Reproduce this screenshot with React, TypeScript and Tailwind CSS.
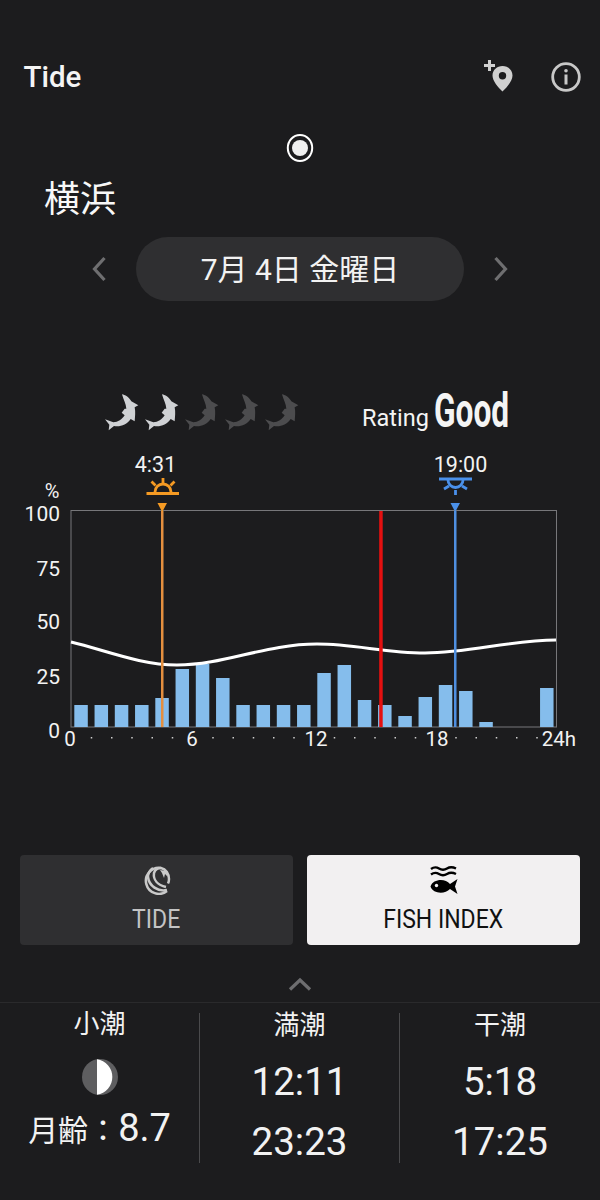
const FONT = "font-['Roboto','Noto_Sans_CJK_JP',sans-serif]";

function Fish({ dim }: { dim?: boolean }) {
  return (
    <svg width="35" height="38" viewBox="10 25 105 114" className="shrink-0 mr-[5px]">
      <path
        d="M64 29 C73 30 85 38 92 50 L113 62 L102 68 C105 82 103 95 102 110 L90 103 C78 120 58 128 40 124 L24 137 L26 120 L13 104 L38 113 C52 113 64 104 72 92 L63 84 L72 72 L77 72 C76 58 68 44 64 29 Z"
        fill={dim ? "#4c4c4e" : "#cfd1d4"}
      />
    </svg>
  );
}

const bars = [705, 705, 705, 705, 698, 669, 664, 678, 705, 705, 705, 705, 673, 665, 700, 705, 716, 697, 685, 691, 722, 727, 727, 688];

const ticks = Array.from({ length: 25 }, (_, i) => i).filter((i) => i % 6 !== 0);

function Chart() {
  const yLabels: [string, number][] = [["100", 514], ["75", 569], ["50", 622], ["25", 677], ["0", 731]];
  const xLabels: [string, number][] = [["0", 70], ["6", 192], ["12", 316], ["18", 437], ["24h", 559]];
  return (
    <svg width="600" height="320" viewBox="0 0 600 320" className="block">
      <g transform="translate(0,-450)" fontFamily="Roboto, sans-serif" fill="#f2f2f2">
        <rect x="71" y="510.5" width="485.5" height="216.5" fill="none" stroke="#77777a" strokeWidth="1" />
        {bars.map((top, i) =>
          top < 727 ? <rect key={i} x={74.3 + i * 20.25} y={top} width="13.5" height={727 - top} fill="#85bdec" /> : null,
        )}
        <path d="M71 642 C105 650 140 665 177 665 C225 665 265 644 317 644 C355 644 385 653 425 653 C470 653 510 640 556 640" fill="none" stroke="#ffffff" strokeWidth="3" />
        <rect x="161" y="511" width="2.500" height="216" fill="#e48f3f" />
        <path d="M157.500 503 H167 L162.200 512 Z" fill="#f59a23" />
        <rect x="454" y="511" width="2.500" height="216" fill="#4f8fe0" />
        <path d="M450.500 503 H460 L455.200 512 Z" fill="#4a90ea" />
        <rect x="379.200" y="511" width="3.500" height="216" fill="#e41010" />
        {yLabels.map(([t, y]) => (
          <text key={t} x="60" y={y + 7} fontSize="21" textAnchor="end">{t}</text>
        ))}
        {xLabels.map(([t, x]) => (
          <text key={t} x={x} y="746" fontSize="20.500" textAnchor="middle">{t}</text>
        ))}
        {ticks.map((i) => (
          <rect key={i} x={70.5 + i * 20.25} y="737" width="1.500" height="1.500" fill="#cccccc" />
        ))}
        <text x="52" y="498" fontSize="20" textAnchor="middle">%</text>
        <text x="155.500" y="471.500" fontSize="21.500" textAnchor="middle">4:31</text>
        <text x="460.500" y="471.500" fontSize="21.500" textAnchor="middle">19:00</text>
        <g stroke="#f59a23" strokeWidth="2.800" fill="none">
          <path d="M146.500 493.500 H179" />
          <path d="M155 492 A8 8 0 0 1 171 492" />
          <path d="M163 478 V484 M151.500 481.500 L155.500 485.500 M174.500 481.500 L170.500 485.500" />
        </g>
        <g stroke="#4a90ea" strokeWidth="2.800" fill="none">
          <path d="M439 479 H472" />
          <path d="M448 480 A7.500 7.500 0 0 0 463 480" />
          <path d="M455.500 490 V495 M444 489 L449 486 M467 489 L462 486" />
        </g>
      </g>
    </svg>
  );
}

function TideIcon() {
  return (
    <svg width="28" height="30" viewBox="0 0 28 30" className="block">
      <g fill="none" stroke="#c9c9c9" strokeWidth="2.500">
        <path d="M24 26 A13 13 0 1 1 18 3 C23 4 26 9 26 14 C26 16 25.500 17.500 25 18.500" />
        <path d="M24 25 C15 27 6 21 5 12 C5 8 7 5 10 3" />
        <path d="M23 22 C15 20 10 15 11 8 C12 5 15 3 18 3" />
      </g>
      <path d="M17 5 L23 6 L25 12 L22 9 L21 13 L19 8 Z" fill="#c9c9c9" />
    </svg>
  );
}

function FishIndexIcon() {
  return (
    <svg width="28" height="28" viewBox="0 0 28 28" className="block">
      <g fill="none" stroke="#000" strokeWidth="2.400">
        <path d="M1 3 Q5 0 9 2.500 T17 2.500 T26 2.500" />
        <path d="M1 8.500 Q5 5.500 9 8 T17 8 T26 8" />
      </g>
      <path d="M0.500 20.500 C3 13 15 12 20 18 L27.500 13 L25 20.500 L27.500 28 L20 23 C15 28.500 3 28 0.500 20.500 Z" fill="#000" />
      <circle cx="6.500" cy="19.500" r="1.700" fill="#f2f0f1" />
    </svg>
  );
}

function Stat({ title, a, b }: { title: string; a: string; b: string }) {
  return (
    <div className="flex-1 flex flex-col items-center">
      <div className="text-[26px] leading-[34px] mt-[5px] text-[#f2f2f2]">{title}</div>
      <div className="text-[38.5px] leading-[60px] mt-[10px] text-[#f2f2f2]">{a}</div>
      <div className="text-[38.5px] leading-[60px] text-[#f2f2f2]">{b}</div>
    </div>
  );
}

export default function App() {
  return (
    <div className={`${FONT} w-[600px] h-[1200px] bg-[#1c1c1e] text-white overflow-hidden flex flex-col`}>
      <header className="mt-[53px] h-[48px] flex items-center pl-[23.5px] pr-[19px]">
        <h1 className="text-[29.5px] font-medium text-[#f4f4f4] flex-1">Tide</h1>
        <svg width="32" height="32" viewBox="0 0 32 32" className="mr-[37px] mt-[-2px]">
          <path d="M2 5.500 H13 M7.500 0 V11" stroke="#d0d0d0" strokeWidth="3" />
          <path fillRule="evenodd" d="M20.500 6 C26 6 30.500 10 30.500 15.500 C30.500 21 25 27 20.500 31.500 C16 27 10.500 21 10.500 15.500 C10.500 10 15 6 20.500 6 Z M20.500 12 A3.700 3.700 0 1 0 20.500 19.400 A3.700 3.700 0 1 0 20.500 12 Z" fill="#d0d0d0" />
        </svg>
        <svg width="30" height="30" viewBox="0 0 30 30">
          <circle cx="15" cy="15" r="13.300" fill="none" stroke="#c8c8c8" strokeWidth="2.800" />
          <circle cx="15" cy="8.800" r="1.800" fill="#c8c8c8" />
          <rect x="13.500" y="12.500" width="3" height="10" fill="#c8c8c8" />
        </svg>
      </header>

      <div className="mt-[32px] flex justify-center">
        <svg width="28" height="30" viewBox="0 0 28 30">
          <ellipse cx="14" cy="15" rx="12.200" ry="13" fill="none" stroke="#ffffff" strokeWidth="2" />
          <circle cx="14" cy="15" r="8" fill="#f0f0f0" />
        </svg>
      </div>

      <div className="mt-[12px] ml-[44px] text-[36px] leading-[50px] text-[#f8f8f8]">横浜</div>

      <div className="mt-[12px] flex justify-center items-center h-[64px]">
        <svg width="16" height="26" viewBox="0 0 16 26" className="mr-[29px]">
          <path d="M13.500 2 L3.500 13 L13.500 24" fill="none" stroke="#6e6e70" strokeWidth="3.200" />
        </svg>
        <div className="w-[328px] h-[64px] rounded-[32px] bg-[#2f2f31] flex items-center justify-center text-[30px] text-[#f2f2f2]">
          7月 4日 金曜日
        </div>
        <svg width="16" height="26" viewBox="0 0 16 26" className="ml-[29px]">
          <path d="M2.500 2 L12.500 13 L2.500 24" fill="none" stroke="#6e6e70" strokeWidth="3.200" />
        </svg>
      </div>

      <div className="mt-[86px] h-[50px] flex items-center pl-[104px]">
        <Fish />
        <Fish />
        <Fish dim />
        <Fish dim />
        <Fish dim />
        <span className="ml-[58px] text-[23.5px] text-[#f4f4f4] mt-[14px]">Rating</span>
        <span className="ml-[5px] w-[74px] text-[48px] font-bold text-[#f4f4f4] origin-left scale-x-[0.66] whitespace-nowrap -mt-[2px]">Good</span>
      </div>

      <div className="mt-[13px]">
        <Chart />
      </div>

      <div className="mt-[85px] flex gap-[14px] px-[20px]">
        <div className="flex-1 h-[90px] rounded-[4px] bg-[#2f2f31] flex flex-col items-center pt-[10px]">
          <TideIcon />
          <div className="mt-[10px] text-[25px] leading-[30px] text-[#c4c4c4] origin-center scale-x-[0.92]">TIDE</div>
        </div>
        <div className="flex-1 h-[90px] rounded-[4px] bg-[#f2f0f1] flex flex-col items-center pt-[11px]">
          <FishIndexIcon />
          <div className="mt-[11px] text-[25px] leading-[30px] text-[#111111] origin-center scale-x-[0.92] whitespace-nowrap">FISH INDEX</div>
        </div>
      </div>

      <div className="mt-[32px] flex justify-center">
        <svg width="24" height="14" viewBox="0 0 24 14">
          <path d="M2 12.500 L12 3 L22 12.500" fill="none" stroke="#6e6e70" strokeWidth="3.200" />
        </svg>
      </div>

      <div className="mt-[11px] border-t border-[#2a2a2c] flex h-[170px] pt-[10px]">
        <div className="w-[200px] h-[150px] border-r border-[#4a4a4c] flex flex-col items-center">
          <div className="text-[26px] leading-[34px] mt-[-6px] text-[#f2f2f2]">小潮</div>
          <svg width="38" height="38" viewBox="0 0 38 38" className="mt-[17px]">
            <circle cx="19" cy="19" r="18" fill="#5e5e60" />
            <path d="M16 1.200 A18 18 0 0 1 16 36.800 Z" fill="#ffffff" />
          </svg>
          <div className="leading-[50px] mt-[7px] text-[#f2f2f2] whitespace-nowrap"><span className="text-[30px]">月齢：</span><span className="text-[38px]">8.7</span></div>
        </div>
        <div className="w-[200px] h-[150px] border-r border-[#4a4a4c] flex mt-0">
          <div className="flex-1 -mt-[10px]"><Stat title="満潮" a="12:11" b="23:23" /></div>
        </div>
        <div className="w-[200px] h-[150px] flex">
          <div className="flex-1 -mt-[10px]"><Stat title="干潮" a="5:18" b="17:25" /></div>
        </div>
      </div>
    </div>
  );
}
